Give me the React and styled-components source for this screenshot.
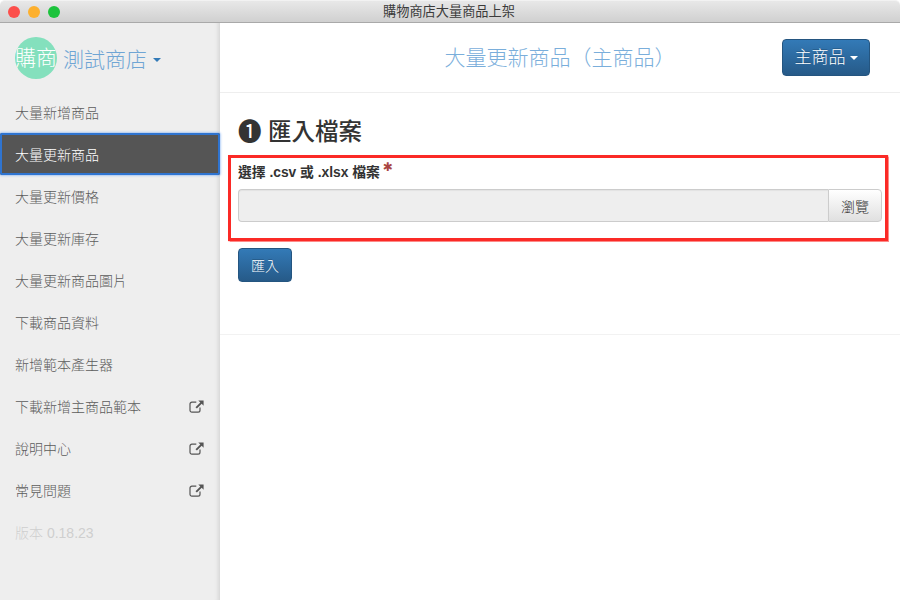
import React from "react";
import styled, { createGlobalStyle } from "styled-components";

const FONT = `"Liberation Sans", "Noto Sans CJK TC", sans-serif`;

const Global = createGlobalStyle`
  html, body { margin: 0; padding: 0; background: #fff; height: 100%; overflow: hidden; }
  * { box-sizing: border-box; }
  body { font-family: ${FONT}; }
`;

const Window = styled.div`
  width: 900px;
  height: 600px;
  display: flex;
  flex-direction: column;
  background: #fff;
  overflow: hidden;
`;

const TitleBar = styled.div`
  height: 23px;
  flex: none;
  position: relative;
  display: flex;
  align-items: center;
  justify-content: center;
  padding-right: 2px;
  background: linear-gradient(#e8e8e8, #d0d0d0);
  border-top: 1px solid #f2f2f2;
  border-bottom: 1px solid #a9a9a9;
  border-radius: 5px 5px 0 0;
  font-size: 13.2px;
  line-height: 20px;
  color: #3b3b3b;
`;

const Lights = styled.div`
  position: absolute;
  left: 8px;
  top: 5px;
  display: flex;
  gap: 8px;
`;

const Light = styled.span`
  width: 12px;
  height: 12px;
  border-radius: 50%;
  background: ${(p) => p.$color};
`;

const Body = styled.div`
  flex: 1;
  display: flex;
  min-height: 0;
`;

const Sidebar = styled.nav`
  width: 220px;
  flex: none;
  background: #eee;
  box-shadow: inset -6px 0 5px -5px rgba(0, 0, 0, 0.14);
  display: flex;
  flex-direction: column;
`;

const Brand = styled.div`
  height: 69px;
  padding: 14px 0 0 15px;
  display: flex;
  align-items: flex-start;
  margin-bottom: -1px;
`;

const Avatar = styled.div`
  width: 42px;
  height: 42px;
  border-radius: 50%;
  background: #84e0bd;
  color: #fff;
  font-size: 21px;
  font-weight: 300;
  line-height: 42px;
  white-space: nowrap;
  overflow: hidden;
  text-align: center;
  flex: none;
`;

const StoreName = styled.div`
  margin: 8px 0 0 6px;
  font-size: 21px;
  font-weight: 300;
  line-height: 30px;
  color: #6fa5d4;
  display: flex;
  align-items: center;
  gap: 6px;
`;

const Caret = styled.span`
  width: 0;
  height: 0;
  border-left: 4px solid transparent;
  border-right: 4px solid transparent;
  border-top: 4px solid ${(p) => p.$color};
`;

const NavItem = styled.div`
  height: 42px;
  padding: 0 16px 0 15px;
  display: flex;
  align-items: center;
  justify-content: space-between;
  font-size: 14px;
  font-weight: 300;
  color: ${(p) => (p.$active ? "#fff" : p.$muted ? "#cfcfcf" : "#5c5c5c")};
  background: ${(p) => (p.$active ? "#555" : "transparent")};
  border-radius: ${(p) => (p.$active ? "2px" : "0")};
  box-shadow: ${(p) =>
    p.$active ? "inset 0 0 0 2px #2f74d0, 0 0 2px 1px rgba(90,150,240,.45)" : "none"};
`;

const Main = styled.main`
  flex: 1;
  min-width: 0;
  display: flex;
  flex-direction: column;
`;

const Header = styled.header`
  height: 70px;
  flex: none;
  position: relative;
  display: flex;
  align-items: center;
  justify-content: center;
  border-bottom: 1px solid #eee;
  padding: 0 0 3px 0;
`;

const PageTitle = styled.h1`
  margin: 0;
  font-size: 21px;
  font-weight: 300;
  color: #7aaedb;
`;

const PrimaryButton = styled.button`
  font-family: inherit;
  color: #fff;
  border: 1px solid #245580;
  border-radius: 4px;
  background: linear-gradient(#337ab7, #265a88);
  text-shadow: 0 -1px 0 rgba(0, 0, 0, 0.2);
  display: inline-flex;
  align-items: center;
  justify-content: center;
  padding: 0;
  font-weight: 300;
`;

const ProductButton = styled(PrimaryButton)`
  position: absolute;
  right: 30px;
  top: 16px;
  width: 88px;
  height: 37px;
  font-size: 17px;
  line-height: 32px;
  gap: 4px;
`;

const Section = styled.section`
  height: 242px;
  flex: none;
  border-bottom: 1px solid #f2f2f2;
  padding: 22px 12px 0 8px;
`;

const Heading = styled.h2`
  margin: 0 0 6px 10px;
  height: 34px;
  font-size: 23.5px;
  line-height: 34px;
  font-weight: 500;
  color: #333;
`;

const HighlightBox = styled.div`
  height: 86px;
  border: 3px solid #fb2a26;
  box-shadow: 0 0 1px 0.5px rgba(251, 42, 38, 0.55);
  padding: 6px 3px 0 7px;
`;

const FieldLabel = styled.label`
  display: block;
  height: 18px;
  margin-bottom: 7px;
  font-size: 13.8px;
  line-height: 18px;
  font-weight: 700;
  color: #333;
`;

const Required = styled.sup`
  color: #a94442;
  font-size: 12px;
  line-height: 0;
  margin-left: 3px;
  font-family: "DejaVu Sans", sans-serif;
`;

const InputGroup = styled.div`
  display: flex;
  height: 33px;
`;

const FileInput = styled.div`
  flex: 1;
  background: #eee;
  border: 1px solid #ccc;
  border-right: none;
  border-radius: 4px 0 0 4px;
  box-shadow: inset 0 1px 1px rgba(0, 0, 0, 0.05);
`;

const BrowseButton = styled.button`
  width: 54px;
  font-family: inherit;
  font-size: 14px;
  font-weight: 300;
  color: #333;
  border: 1px solid #ccc;
  border-radius: 0 4px 4px 0;
  background: linear-gradient(#fff, #e0e0e0);
  padding: 0;
`;

const ImportButton = styled(PrimaryButton)`
  margin: 7px 0 0 10px;
  width: 54px;
  height: 34px;
  font-size: 14px;
`;

const ExternalIcon = () => (
  <svg width="15" height="13" viewBox="0 0 15 13" fill="none" aria-hidden="true">
    <path
      d="M11 7.5v2.8a1.9 1.9 0 0 1-1.9 1.9h-6.2a1.9 1.9 0 0 1-1.9-1.9v-6.2a1.9 1.9 0 0 1 1.9-1.9h4.4"
      stroke="#555"
      strokeWidth="1.2"
    />
    <path d="M9.3 .4h5.3v5.3l-1.9-1.9-4.8 4.8-1.4-1.4 4.8-4.8z" fill="#555" />
  </svg>
);

const NAV = [
  { label: "大量新增商品" },
  { label: "大量更新商品", active: true },
  { label: "大量更新價格" },
  { label: "大量更新庫存" },
  { label: "大量更新商品圖片" },
  { label: "下載商品資料" },
  { label: "新增範本產生器" },
  { label: "下載新增主商品範本", external: true },
  { label: "說明中心", external: true },
  { label: "常見問題", external: true },
  { label: "版本 0.18.23", muted: true },
];

export default function App() {
  return (
    <Window>
      <Global />
      <TitleBar>
        <Lights>
          <Light $color="#fc4f4b" />
          <Light $color="#fdb02e" />
          <Light $color="#1cc33c" />
        </Lights>
        購物商店大量商品上架
      </TitleBar>
      <Body>
        <Sidebar>
          <Brand>
            <Avatar>購商</Avatar>
            <StoreName>
              測試商店
              <Caret $color="#337ab7" />
            </StoreName>
          </Brand>
          {NAV.map((item) => (
            <NavItem key={item.label} $active={item.active} $muted={item.muted}>
              {item.label}
              {item.external && <ExternalIcon />}
            </NavItem>
          ))}
        </Sidebar>
        <Main>
          <Header>
            <PageTitle>大量更新商品（主商品）</PageTitle>
            <ProductButton>
              主商品
              <Caret $color="#fff" />
            </ProductButton>
          </Header>
          <Section>
            <Heading>❶ 匯入檔案</Heading>
            <HighlightBox>
              <FieldLabel>
                選擇 .csv 或 .xlsx 檔案
                <Required>✱</Required>
              </FieldLabel>
              <InputGroup>
                <FileInput />
                <BrowseButton>瀏覽</BrowseButton>
              </InputGroup>
            </HighlightBox>
            <ImportButton>匯入</ImportButton>
          </Section>
        </Main>
      </Body>
    </Window>
  );
}
